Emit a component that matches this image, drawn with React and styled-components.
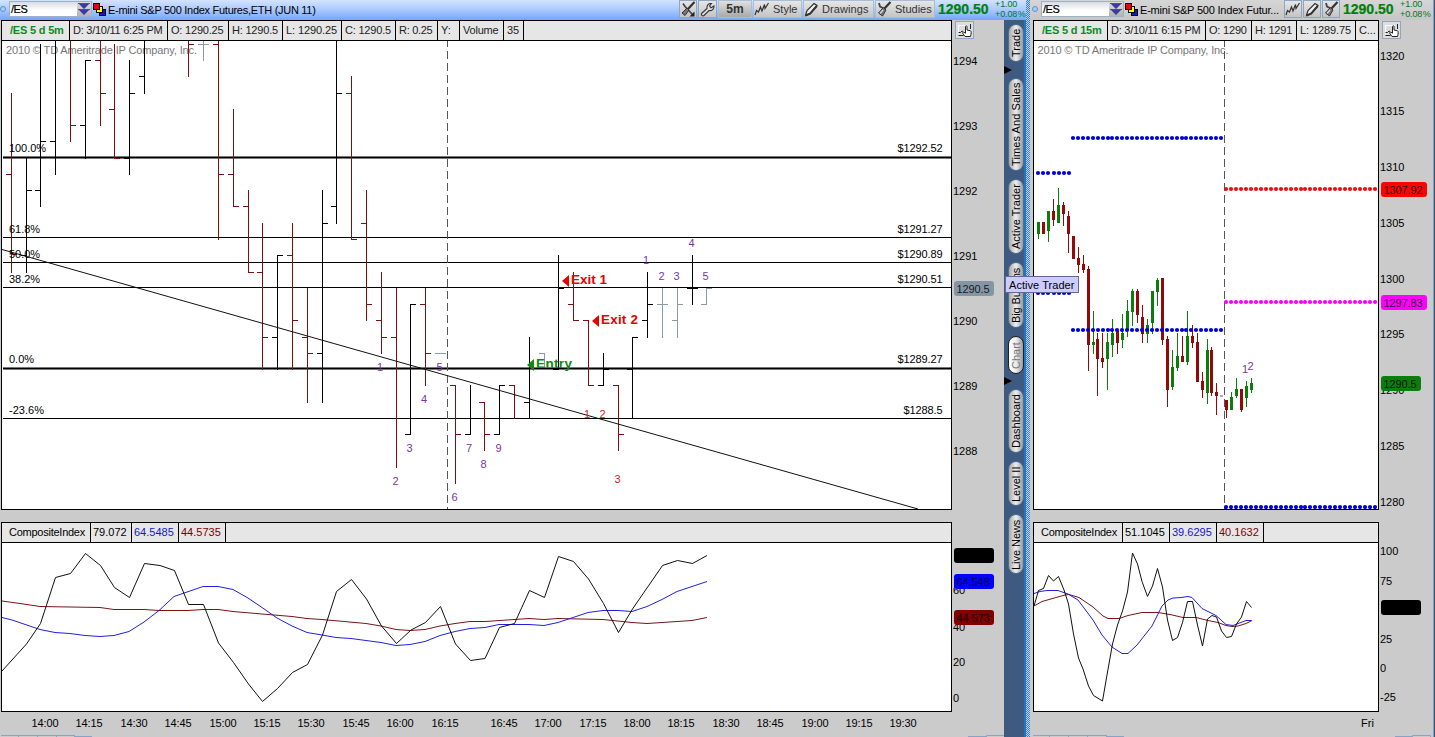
import React from 'react';
import styled, { createGlobalStyle } from "styled-components";

const GlobalStyle = createGlobalStyle`
  body {
    margin: 0;
    background: #cbcbcb;
    overflow: hidden;
  }
  * {
    box-sizing: border-box;
  }
`;

const Screen = styled.div`
  display: flex;
  width: 1435px;
  height: 737px;
  background: #cbcbcb;
  font-family: "Liberation Sans", Arial, sans-serif;
  font-size: 11px;
  color: #000;
  overflow: hidden;
`;

const MainWindow = styled.div`
  display: flex;
  flex-direction: column;
  width: 1026px;
  flex: none;
`;

const MainBody = styled.div`
  display: flex;
  flex: 1;
`;

const SideWindow = styled.div`
  display: flex;
  flex-direction: column;
  width: 403px;
  flex: none;
`;

const Edge = styled.div`
  width: 2px;
  flex: none;
  background: #3f536b;
  border-left: 1px solid #7aa0d0;
`;

const Splitter = styled.div`
  width: 4px;
  flex: none;
  background-color: #a8c0dc;
  background-image: conic-gradient(#2f7fe0 25%, #c4d2e2 0 50%, #2f7fe0 0 75%, #c4d2e2 0);
  background-size: 2px 2px;
`;

/* ---- title bars ---- */

const TitleBar = styled.div`
  display: flex;
  align-items: center;
  height: 20px;
  flex: none;
  padding-left: ${props => props.$side ? 2 : 0}px;
  background: ${props => props.$side
    ? 'linear-gradient(#d6d6d6, #c6c6c6)'
    : 'linear-gradient(#d3e3ff, #a9c8fe 50%, #73a5fb)'};
`;

const LinkDot = styled.div`
  width: 6px;
  height: 6px;
  margin-top: -2px;
  flex: none;
  border: 1px solid #5b92cf;
  border-radius: 50%;
  background: #a9ccf5;
`;

const SymbolBox = styled.div`
  display: flex;
  align-items: center;
  width: 83px;
  height: 16px;
  margin: -3px 1px 0 3px;
  flex: none;
  border: 1px solid #9fb1c6;
  background: linear-gradient(#d8dde3, #fff 60%);
`;

const SymbolText = styled.span`
  flex: 1;
  padding: 1px 0 0 1px;
  letter-spacing: -0.5px;
  -webkit-text-stroke: 0.2px #000;
`;

const DropButton = styled.div`
  display: flex;
  align-items: center;
  justify-content: center;
  width: 14px;
  height: 14px;
  background: linear-gradient(#ddd, #b4b4b4);
`;

const Title = styled.span`
  flex: 1;
  padding-left: 1px;
  white-space: nowrap;
  font-size: 11px;
  letter-spacing: ${props => props.$ls || 0}px;
`;

const ToolButton = styled.div`
  display: flex;
  align-items: center;
  justify-content: ${props => props.$label ? 'flex-start' : 'center'};
  gap: 3px;
  width: ${props => props.$w}px;
  height: 18px;
  margin: -2px 1px 0 0;
  flex: none;
  border: 1px solid ${props => props.$flat ? '#a9bdd6' : '#8fa6c0'};
  background: linear-gradient(${props => props.$dark ? '#e0e0e0, #a9a9a9' : '#e6e6e6, #c4c4c4'});
  color: #333;
  font-size: ${props => props.$bold ? 12 : 11}px;
  font-weight: ${props => props.$bold ? 'bold' : 'normal'};
  letter-spacing: ${props => props.$ls || 0}px;
  line-height: 14px;
  white-space: nowrap;
`;

const LastPrice = styled.span`
  width: 58px;
  margin-top: -2px;
  padding-left: 2px;
  flex: none;
  color: #00800a;
  font-size: 14px;
  font-weight: bold;
  -webkit-text-stroke: 0.2px #00800a;
`;

const NetChange = styled.div`
  display: flex;
  flex-direction: column;
  width: ${props => props.$w}px;
  margin-top: -2px;
  padding-left: 1px;
  flex: none;
  color: #007a1c;
  font-size: 9px;
  line-height: 10px;
  letter-spacing: -0.1px;
  word-spacing: -2px;
  white-space: nowrap;
`;

/* ---- chart panes ---- */

const Charts = styled.div`
  display: flex;
  flex-direction: column;
  width: ${props => props.$w}px;
  padding-left: ${props => props.$pad}px;
  flex: none;
`;

const PaneRow = styled.div`
  display: flex;
  margin-bottom: ${props => props.$gap || 0}px;
`;

const Pane = styled.div`
  width: ${props => props.$w}px;
  flex: none;
  border: 1px solid #000;
  background: #fff;
`;

const Strip = styled.div`
  display: flex;
  height: 20px;
  border-bottom: 1px solid #000;
  background: #e6e6e6;
`;

const Cell = styled.div`
  display: flex;
  align-items: center;
  width: ${props => props.$w}px;
  flex: none;
  padding-left: ${props => props.$pad || 3}px;
  padding-bottom: 1px;
  border-right: ${props => props.$last ? 0 : '1px solid #000'};
  color: ${props => props.$color || '#222'};
  font-weight: ${props => props.$bold ? 'bold' : 'normal'};
  letter-spacing: ${props => props.$ls || 0}px;
  white-space: nowrap;
  overflow: hidden;
`;

const Plot = styled.svg`
  display: block;
  font-family: "Liberation Sans", Arial, sans-serif;
  font-size: 11px;
`;

const AxisColumn = styled.div`
  display: flex;
  flex-direction: column;
  flex: none;
`;

const AxisHead = styled.div`
  height: 20px;
  padding: 1px 0 0 3px;
`;

const HandButton = styled.div`
  width: 19px;
  height: 18px;
  border: 1px solid #8da6c3;
  background: #dedede;
`;

/* ---- gadget rail ---- */

const Rail = styled.div`
  position: relative;
  display: flex;
  flex-direction: column;
  width: 22px;
  padding: 4px 0 0 4px;
  flex: none;
  background: #3e5a80;
  border-right: 2px solid #2272c8;
`;

const Tab = styled.div`
  width: 16px;
  height: ${props => props.$h}px;
  margin-bottom: ${props => props.$gap}px;
  padding-top: ${props => props.$pad || 4}px;
  flex: none;
  border: 1px solid ${props => props.$active ? '#222' : '#4b7096'};
  border-radius: 8px;
  background: linear-gradient(90deg, #999, #eee 50%, ${props => props.$active ? '#fff' : '#a8a8a8'});
  color: ${props => props.$active ? '#777' : '#000'};
  writing-mode: vertical-rl;
  transform: rotate(180deg);
  letter-spacing: ${props => props.$ls || 0}px;
  line-height: 14px;
  white-space: nowrap;
`;

const Arrow = styled.div`
  position: absolute;
  left: 0;
  top: ${props => props.$top}px;
  border-left: 8px solid #000;
  border-top: 4px solid transparent;
  border-bottom: 4px solid transparent;
`;

const Tooltip = styled.div`
  position: absolute;
  left: 1px;
  top: 256px;
  z-index: 2;
  width: 74px;
  height: 17px;
  padding-left: 3px;
  border: 1px solid #666699;
  background: #ccccff;
  line-height: 16px;
  letter-spacing: 0.05px;
  white-space: nowrap;
`;

/* ---- icons ---- */

const Chevrons = () => (
  <svg width="12" height="12" viewBox="0 0 12 12">
    <path d="M0 0h12L6 6zM0 6h12L6 12z" fill="#3a3aa8" />
    <path d="M0 .5h12M0 6.500h12" stroke="#555" />
  </svg>
);

const ColorSquares = () => (
  <svg width="14" height="14" viewBox="0 0 14 14" style={{ flex: 'none' }} shapeRendering="crispEdges">
    <rect x="6.5" y="6.5" width="6" height="6" fill="#0a1ad0" stroke="#000" />
    <rect x="3.5" y="3.5" width="6" height="6" fill="#ff0" stroke="#000" />
    <rect x="0.5" y="0.5" width="6" height="6" fill="#f00010" stroke="#000" />
  </svg>
);

const StudiesIcon = () => (
  <svg width="16" height="16" viewBox="0 0 16 16" fill="none">
    <path d="M3 2l1 3.500 3 1.500" stroke="#444" strokeWidth="1.800" />
    <path d="M14.500 1L8 8" stroke="#333" strokeWidth="2.200" />
    <path d="M7.500 6.500l2.500 2.500-3.500 6-4-3z" fill="#777" stroke="#333" />
    <path d="M7 9l-3 3.500" stroke="#ddd" strokeWidth="1.200" />
  </svg>
);

const CrossToolsIcon = () => (
  <svg width="16" height="16" viewBox="0 0 16 16" fill="none">
    <path d="M3 2.500l2 3 7.500 8" stroke="#444" strokeWidth="1.700" />
    <path d="M14.500 1L8 8" stroke="#333" strokeWidth="2.200" />
    <path d="M7 7l2 2-4 5.500-3-2.500z" fill="#777" stroke="#333" />
    <path d="M14.500 10.500v5h-5z" fill="#222" />
  </svg>
);

const WrenchIcon = () => (
  <svg width="15" height="15" viewBox="0 0 15 15">
    <path
      d="M1.500 11.500L7 6.500C6.500 3.500 8.500 1 11.500 1.500L9.500 4l1.500 1.800L14 4c.2 3-2 5-5 4.600L4 13.500c-1.500 1-3.300-.5-2.500-2z"
      fill="#ddd" stroke="#333" strokeWidth="1.100"
    />
  </svg>
);

const StyleIcon = () => (
  <svg width="16" height="16" viewBox="0 0 16 16" fill="none" stroke="#333" strokeWidth="1.200">
    <path d="M1 14l1.500-4.500 2 1.500L6.500 6 8 10l2.500-6.500.5 4L14.500 2" />
  </svg>
);

const PencilIcon = () => (
  <svg width="15" height="15" viewBox="0 0 15 15">
    <path d="M1.500 13.500l1.500-5L10 1.500l3 2-6.500 8z" fill="#eee" stroke="#333" strokeWidth="1.200" />
    <path d="M1.500 13.500l4.500-1.800L12.800 4" fill="none" stroke="#333" strokeWidth="2" />
  </svg>
);

const HandIcon = () => (
  <svg width="17" height="16" viewBox="0 0 17 16">
    <path d="M2.500 12V3.500h9" fill="none" stroke="#fff" />
    <path d="M2.500 10.500h2l1.500-1.500 1 .5M2.500 13.500h5M14.500 2v5" fill="none" stroke="#222" />
    <path
      d="M9 14.500l-2.500-3.500 1-1 2 1.200V4.500c0-1 1.500-1 1.500 0V8l3.500.8c1 .3.800 3.200 0 5.700z"
      fill="#fff" stroke="#222"
    />
  </svg>
);

/* ---- data ---- */

const RED = '#7c1010';
const INK = '#000';
const GREY = '#8c9aa6';

// x, high, low, open, close, colour
const bars = [
  [11, 93, 272, 174, 254, RED], [26, 158, 272, 255, 190, INK],
  [40, 44, 206, 190, 141, INK], [55, 41, 174, 141, null, INK],
  [70, 41, 141, null, 125, RED], [85, 60, 158, 125, 60, INK],
  [100, 41, 125, 60, 93, RED], [114, 44, 158, 109, 158, RED],
  [129, 60, 174, 158, 93, INK], [144, 41, 93, 76, null, INK],
  [188, 41, 76, null, 44, RED], [203, 41, 60, 44, 44, GREY],
  [218, 41, 239, 44, 174, RED], [233, 109, 206, 174, 206, RED],
  [248, 190, 272, 206, 272, RED], [262, 223, 369, 272, 337, RED],
  [277, 255, 369, 337, 255, INK], [292, 223, 369, 255, 320, RED],
  [307, 288, 402, 337, 353, RED], [322, 190, 402, 353, 223, INK],
  [336, 41, 223, 206, 93, INK], [351, 76, 239, 93, 239, RED],
  [366, 190, 320, 223, 304, RED], [381, 272, 353, 320, 337, RED],
  [396, 288, 467, 337, null, RED], [410, 304, 434, 434, 304, INK],
  [425, 288, 385, 304, 353, RED], [440, 353, 353, 353, 353, GREY],
  [455, 385, 483, 385, 434, RED], [470, 385, 434, 434, null, INK],
  [484, 402, 450, 402, 434, RED], [499, 385, 434, 434, 385, INK],
  [514, 385, 418, 385, null, RED], [529, 337, 418, 402, null, INK],
  [544, 353, 366, 353, null, GREY], [558, 255, 369, 369, 288, INK],
  [573, 272, 320, 304, 320, RED], [588, 320, 385, 320, 385, RED],
  [603, 353, 385, 385, 369, INK], [618, 385, 450, 385, 434, RED],
  [632, 337, 418, 369, 337, INK], [647, 272, 337, 320, 304, INK],
  [662, 288, 337, 304, 304, GREY], [677, 288, 337, 320, 304, GREY],
  [692, 255, 304, 288, 288, INK], [706, 288, 304, 304, 288, GREY],
];

const levels = [
  { y: 157, pct: '100.0%', pctW: 37, price: '$1292.52', w: 45, thick: true },
  { y: 237, pct: '61.8%', pctW: 31, price: '$1291.27', w: 45, ty: 233 },
  { y: 262, pct: '50.0%', pctW: 31, price: '$1290.89', w: 45, ty: 258 },
  { y: 287, pct: '38.2%', pctW: 31, price: '$1290.51', w: 45, ty: 283 },
  { y: 368, pct: '0.0%', pctW: 25, price: '$1289.27', w: 45, thick: true, ty: 363 },
  { y: 418, pct: '-23.6%', pctW: 35, price: '$1288.5', w: 39, ty: 414 },
];

const PURPLE = '#7a35a5';
const counts = [
  [380, 367, '1'], [395.5, 481, '2'], [409.5, 448, '3'], [424, 399, '4'], [439.5, 367, '5'],
  [454.5, 497, '6'], [469, 448, '7'], [483.5, 464, '8'], [498.5, 448, '9'],
  [587, 414, '1', '#e02020'], [602.5, 414, '2', '#e02020'], [617.5, 479, '3', '#e02020'],
  [646, 260, '1'], [661.5, 276, '2'], [676.5, 276, '3'], [691.5, 243, '4'], [705.5, 276, '5'],
];

const notes = [
  { x: 571, y: 284, w: 36, tip: 562, cy: 281, label: 'Exit 1', color: '#e80000' },
  { x: 601, y: 324, w: 37, tip: 592, cy: 321, label: 'Exit 2', color: '#e80000' },
  { x: 536, y: 368, w: 36, tip: 527, cy: 365, label: 'Entry', color: '#0c8a0c' },
];

const UP = '#0a7d0a';
const DOWN = '#930808';

// x, high, low, body top, body bottom, colour
const candles = [
  [1038, 222, 239, 222, 234, UP], [1043, 222, 234, 222, 234, DOWN],
  [1048, 211, 242, 211, 231, UP], [1053, 199, 226, 211, 220, DOWN],
  [1058, 188, 223, 205, 223, UP], [1063, 202, 226, 205, 214, DOWN],
  [1068, 211, 253, 216, 234, DOWN], [1073, 236, 259, 236, 259, DOWN],
  [1078, 247, 273, 258, 265, DOWN], [1083, 255, 273, 264, 270, DOWN],
  [1088, 266, 371, 269, 345, DOWN], [1093, 311, 354, 342, 345, UP],
  [1097, 333, 396, 339, 359, DOWN], [1102, 333, 368, 358, 362, DOWN],
  [1107, 333, 390, 342, 359, UP], [1112, 319, 357, 333, 345, UP],
  [1117, 331, 354, 331, 343, DOWN], [1122, 314, 348, 333, 340, UP],
  [1127, 300, 337, 311, 331, UP], [1132, 289, 326, 291, 312, UP],
  [1137, 289, 323, 291, 315, DOWN], [1142, 305, 343, 317, 334, DOWN],
  [1147, 319, 343, 325, 334, UP], [1152, 291, 334, 291, 323, UP],
  [1157, 278, 306, 280, 292, UP], [1162, 278, 345, 278, 340, DOWN],
  [1167, 336, 407, 339, 390, DOWN], [1172, 350, 390, 367, 387, UP],
  [1177, 333, 371, 356, 368, UP], [1182, 336, 362, 356, 362, DOWN],
  [1187, 311, 365, 336, 362, UP], [1192, 325, 348, 336, 343, DOWN],
  [1197, 333, 382, 342, 382, DOWN], [1202, 372, 398, 381, 390, DOWN],
  [1207, 339, 404, 350, 393, UP], [1211, 347, 396, 350, 393, DOWN],
  [1216, 383, 415, 392, 396, DOWN], [1221, 395, 397, 395, 397, '#b0b0b0'],
  [1226, 400, 418, 400, 410, DOWN], [1231, 392, 410, 397, 410, UP],
  [1236, 378, 398, 389, 396, UP], [1241, 389, 412, 389, 410, DOWN],
  [1246, 381, 407, 386, 398, UP], [1251, 378, 393, 383, 390, UP],
];

// first x, last x, count, y, colour
const dotRows = [
  [1038, 1069, 7, 173, '#0000d8'],
  [1073, 1221, 31, 138, '#0000d8'],
  [1038, 1069, 7, 293, '#0000d8'],
  [1073, 1221, 31, 330, '#0000d8'],
  [1226, 1375, 31, 189, '#e81010'],
  [1226, 1375, 31, 302, '#f800f8'],
  [1226, 1375, 31, 507, '#0000d8'],
];

const mainIndex = {
  red: '2,601 20,603.5 40,606.5 100,607.5 114,609.5 144,609.5 159,610.5 188,610.5 203,609.5 218,609.5 233,611.5 262,614 292,616.5 307,618.5 322,619.5 366,623.5 381,626 396,629.5 410,630.5 425,629.5 440,626 455,623.5 470,621.5 485,621.5 529,618.5 544,619.5 558,618.5 603,619.5 632,622.5 647,623.5 692,620.5 707,617.5',
  blue: '2,617.5 12,620 40,629.5 55,632.5 70,633.5 85,635.5 100,636.5 114,635.5 129,631.5 144,622 159,610.5 174,596.5 203,586.5 218,586.5 233,589.5 248,598 262,607.5 277,618 292,626 307,632.5 322,635 336,637.5 351,638.5 366,640.5 381,642.5 396,645.5 410,644.5 425,641.5 440,635.5 455,631.5 470,628.5 485,627.5 499,624.5 529,624.5 544,625.5 558,622.5 588,612.5 603,610.5 618,610.5 632,611.5 647,606.5 662,599.5 677,591.5 707,581.5',
  black: '2,671 26.5,644 40.5,623.5 55.5,577.5 70.5,573.5 85.5,553.5 100.5,565.5 114.5,587.5 129.5,597.5 144.5,563.5 160,565.5 174.5,570.5 188.5,604.5 203.5,604.5 218.5,643 233.5,662.5 248.5,684 262.5,701.5 277.5,688.5 292.5,672.5 307.5,664.5 322.5,635 336.5,591.5 351.5,579.5 366.5,599 381.5,626 396.5,643.5 411,630 425.5,622.5 440.5,606.5 455.5,644 470.5,660.5 485,658.5 499.5,627.5 514.5,623.5 529.5,590.5 544.5,597.5 558.5,556.5 573.5,561.5 588.5,579 603.5,603.5 618.5,632.5 632.5,609 662.5,565.5 677.5,560.5 692.5,563.5 707,555.5',
};

const sideIndex = {
  red: '1034,606 1042,601.5 1065,595 1069,594.5 1079,597.5 1093,607 1103,616 1108,618.5 1119,618.5 1128,615.5 1142,612.5 1158,612.5 1170,614.5 1183,617.5 1196,617.5 1208,620.5 1218,622.5 1226,625.5 1232,626.5 1238,626 1246,623.5 1252,620.5',
  blue: '1034,593.5 1040,591.5 1047,590.5 1058,590.5 1068,594 1078,600 1093,620 1102,635 1112,647 1122,653.5 1128,653.5 1137,645 1152,626 1162,606 1168,600 1173,598 1181,597.5 1188,596.5 1192,597.5 1202,608.5 1216,615.5 1226,624.5 1233,625.5 1246,620.5 1251,620.5',
  black: '1034,606 1038.5,590.5 1043.5,588.5 1048.5,575.5 1053.5,581 1058.5,576.5 1064,590 1068.5,604 1073.5,634 1078.5,658 1083,669 1088.5,686 1093.5,695.5 1102.5,701 1107,675 1112.5,644 1117.5,625 1122.5,611 1127.5,592 1132.5,553 1137.5,564 1142,581.5 1147.5,596.5 1152.5,586 1157.5,568.5 1162.5,587 1167.5,620 1172.5,640.5 1177.5,637.5 1182.5,622.5 1187.5,601.5 1192.5,601.5 1197.5,625 1202.5,646 1207.5,619 1212,615.5 1216.5,617 1221.5,631 1226.5,637.5 1231.5,636.5 1236.5,624 1241.5,617 1246.5,601.5 1251.5,607.5',
};

const mainTimes = [
  [31.5, '14:00'], [75.5, '14:15'], [120.5, '14:30'], [164.5, '14:45'], [209.5, '15:00'],
  [253.5, '15:15'], [297.5, '15:30'], [342.5, '15:45'], [386.5, '16:00'], [431.5, '16:15'],
  [490.5, '16:45'], [534.5, '17:00'], [579.5, '17:15'], [623.5, '18:00'], [667.5, '18:15'],
  [712.5, '18:30'], [756.5, '18:45'], [801.5, '19:00'], [845.5, '19:15'], [889.5, '19:30'],
];

const tabs = [
  { label: 'Trade', h: 38, gap: 16, pad: 4 },
  { label: 'Times And Sales', h: 93, gap: 8, ls: 0.1 },
  { label: 'Active Trader', h: 75, gap: 8 },
  { label: 'Big Buttons', h: 66, gap: 8, ls: -0.1 },
  { label: 'Chart', h: 38, gap: 15, active: true },
  { label: 'Dashboard', h: 64, gap: 8 },
  { label: 'Level II', h: 45, gap: 8, pad: 3 },
  { label: 'Live News', h: 60, gap: 0, ls: -0.05, pad: 3 },
];

/* ---- chart pieces ---- */

const Watermark = ({ x }) => (
  <text x={x} y="54" fill="#777" textLength="191">2010 © TD Ameritrade IP Company, Inc.</text>
);

const Dashed = ({ x }) => (
  <path d={`M${x}.5 39v471`} stroke="#555" strokeDasharray="8 4" shapeRendering="crispEdges" />
);

const PriceAxis = ({ x, y, width, height, labels, tags }) => (
  <Plot width={width} height={height} viewBox={`${x} ${y} ${width} ${height}`}>
    {labels.map(([cy, label]) => (
      <text key={label} x={x + 1} y={cy + 4}>{label}</text>
    ))}
    {tags.map(([top, w, fill, label]) => (
      <g key={top}>
        <rect x={x + 2} y={top} width={w} height="15" rx="3" fill={fill} />
        <text x={x + 4.5} y={top + 11.5} fillOpacity="0.85" textLength={w - 7}>{label}</text>
      </g>
    ))}
  </Plot>
);

const MainPlot = () => (
  <Plot width="949" height="468" viewBox="2 41 949 468">
    <Watermark x={6} />
    <g shapeRendering="crispEdges">
      {levels.map(l => (
        <g key={l.y}>
          {l.thick && <rect x="3" y={l.y - 1} width="948" height="3" fill="#777" />}
          <rect x="3" y={l.y} width="948" height="1" />
        </g>
      ))}
      {bars.map(([x, high, low, open, close, color]) => (
        <g key={x} fill={color}>
          <rect x={x} y={high} width="1" height={low - high + 1} />
          {open && <rect x={x - 5} y={open} width="5" height="1" />}
          {close && <rect x={x + 1} y={close} width="5" height="1" />}
        </g>
      ))}
      <rect x="687" y="288" width="11" height="1" />
    </g>
    <Dashed x={447} />
    <path d="M2 249.5L918 509" stroke="#111" fill="none" />
    {levels.map(l => (
      <g key={l.y}>
        <text x="9" y={l.ty || 152} textLength={l.pctW}>{l.pct}</text>
        <text x={942.5 - l.w} y={l.ty || 152} textLength={l.w}>{l.price}</text>
      </g>
    ))}
    {counts.map(([x, y, label, color]) => (
      <text key={`${x}-${y}`} x={x} y={y + 4} textAnchor="middle" fill={color || PURPLE}>{label}</text>
    ))}
    {notes.map(n => (
      <g key={n.label} fill={n.color}>
        <path d={`M${n.tip} ${n.cy}l7-6v12z`} />
        <text x={n.x} y={n.y} fontSize="13.500" fontWeight="bold" textLength={n.w}>{n.label}</text>
      </g>
    ))}
  </Plot>
);

const SidePlot = () => (
  <Plot width="344" height="468" viewBox="1034 41 344 468">
    <Watermark x={1037.5} />
    <Dashed x={1224} />
    <g shapeRendering="crispEdges">
      {candles.map(([x, high, low, top, bottom, color]) => (
        <g key={x} fill={color}>
          <rect x={x} y={high} width="1" height={low - high} />
          <rect x={x - 1} y={top} width="3" height={bottom - top} />
        </g>
      ))}
    </g>
    {dotRows.map(([from, to, n, y, color]) => (
      <g key={`${from}-${y}`} fill={color}>
        {Array.from({ length: n }, (_, i) => (
          <circle key={i} cx={Math.round(from + (to - from) * i / (n - 1))} cy={y} r="2.100" />
        ))}
      </g>
    ))}
    <text x="1245" y="373" textAnchor="middle" fill={PURPLE}>1</text>
    <text x="1250.500" y="370" textAnchor="middle" fill={PURPLE}>2</text>
  </Plot>
);

const IndexPlot = ({ x, width, lines }) => (
  <Plot width={width} height="168" viewBox={`${x} 543 ${width} 168`} fill="none">
    <polyline points={lines.red} stroke="#7a1414" />
    <polyline points={lines.blue} stroke="#2020e0" />
    <polyline points={lines.black} stroke="#111" />
  </Plot>
);

const SymbolPicker = () => (
  <>
    <LinkDot />
    <SymbolBox>
      <SymbolText>/ES</SymbolText>
      <DropButton><Chevrons /></DropButton>
    </SymbolBox>
    <ColorSquares />
  </>
);

const Quote = ({ width }) => (
  <>
    <LastPrice>1290.50</LastPrice>
    <NetChange $w={width}>
      <span>+1.00</span>
      <span>+0.08 %</span>
    </NetChange>
  </>
);

const MainCharts = () => (
  <Charts $w={1004} $pad={1}>
    <PaneRow $gap={12}>
      <Pane $w={951}>
        <Strip>
          <Cell $w={68} $pad={8} $bold $color="#0c8a24" $ls={-0.2}>/ES 5 d 5m</Cell>
          <Cell $w={98} $ls={-0.25}>D: 3/10/11 6:25 PM</Cell>
          <Cell $w={61} $ls={-0.2}>O: 1290.25</Cell>
          <Cell $w={54} $ls={-0.2}>H: 1290.5</Cell>
          <Cell $w={59} $ls={-0.1}>L: 1290.25</Cell>
          <Cell $w={54} $ls={-0.2}>C: 1290.5</Cell>
          <Cell $w={42} $ls={-0.3}>R: 0.25</Cell>
          <Cell $w={22}>Y:</Cell>
          <Cell $w={44} $ls={-0.2}>Volume</Cell>
          <Cell $w={20}>35</Cell>
        </Strip>
        <MainPlot />
      </Pane>
      <AxisColumn>
        <AxisHead><HandButton><HandIcon /></HandButton></AxisHead>
        <PriceAxis
          x={952} y={40} width={52} height={470}
          labels={[[61, '1294'], [126, '1293'], [191, '1292'], [256, '1291'], [321, '1290'], [386, '1289'], [451, '1288']]}
          tags={[[281, 40, '#8496a5', '1290.5']]}
        />
      </AxisColumn>
    </PaneRow>
    <PaneRow>
      <Pane $w={951}>
        <Strip>
          <Cell $w={89} $pad={7} $color="#000" $ls={-0.25}>CompositeIndex</Cell>
          <Cell $w={41} $pad={2} $color="#000">79.072</Cell>
          <Cell $w={47} $pad={2} $color="#1414d8">64.5485</Cell>
          <Cell $w={47} $pad={2} $color="#7a0000">44.5735</Cell>
        </Strip>
        <IndexPlot x={2} width={949} lines={mainIndex} />
      </Pane>
      <PriceAxis
        x={952} y={522} width={52} height={190}
        labels={[[590, '60'], [627, '40'], [662, '20'], [698, '0']]}
        tags={[[548, 40, '#000', '79.072'], [574, 40, '#0000ff', '64.548'], [610, 40, '#800000', '44.573']]}
      />
    </PaneRow>
    <Plot width="1003" height="25" viewBox="1 712 1003 25">
      {mainTimes.map(([x, label]) => (
        <text key={label} x={x} y="727" textLength="27">{label}</text>
      ))}
      <path d="M1 735.5h73M18.5 735v2M37.5 735v2M56.5 735v2M74.500 735v2M75 736.5h17M968 736.5h18M986.5 737v-1.500h18" fill="none" stroke="#87a3c6" />
    </Plot>
  </Charts>
);

const SideCharts = () => (
  <Charts $w={403} $pad={3}>
    <PaneRow $gap={12}>
      <Pane $w={346}>
        <Strip>
          <Cell $w={74} $pad={8} $bold $color="#0c8a24" $ls={-0.2}>/ES 5 d 15m</Cell>
          <Cell $w={98} $ls={-0.25}>D: 3/10/11 6:15 PM</Cell>
          <Cell $w={46} $ls={-0.2}>O: 1290</Cell>
          <Cell $w={45} $ls={-0.2}>H: 1291</Cell>
          <Cell $w={59} $ls={-0.1}>L: 1289.75</Cell>
          <Cell $w={22} $ls={-0.1} $last>C...</Cell>
        </Strip>
        <SidePlot />
      </Pane>
      <AxisColumn>
        <AxisHead><HandButton><HandIcon /></HandButton></AxisHead>
        <PriceAxis
          x={1379} y={40} width={54} height={470}
          labels={[[56, '1320'], [111, '1315'], [167, '1310'], [223, '1305'], [279, '1300'], [334, '1295'], [390, '1290'], [446, '1285'], [502, '1280']]}
          tags={[[182, 46, '#fb0404', '1307.92'], [295, 46, '#ff00ff', '1297.83'], [376, 40, '#0a7d0a', '1290.5']]}
        />
      </AxisColumn>
    </PaneRow>
    <PaneRow>
      <Pane $w={346}>
        <Strip>
          <Cell $w={89} $pad={7} $color="#000" $ls={-0.25}>CompositeIndex</Cell>
          <Cell $w={47} $pad={2} $color="#000">51.1045</Cell>
          <Cell $w={47} $pad={2} $color="#1414d8">39.6295</Cell>
          <Cell $w={47} $pad={2} $color="#7a0000">40.1632</Cell>
        </Strip>
        <IndexPlot x={1034} width={344} lines={sideIndex} />
      </Pane>
      <PriceAxis
        x={1379} y={522} width={54} height={190}
        labels={[[551, '100'], [581, '75'], [639, '25'], [668, '0'], [697, '-25']]}
        tags={[[600, 40, '#000', '51.104']]}
      />
    </PaneRow>
    <Plot width="400" height="25" viewBox="1033 712 400 25">
      <text x="1361" y="727">Fri</text>
      <path d="M1033 735.5h73M1049.500 735v2M1068.500 735v2M1087.500 735v2M1106.500 735v2M1107 736.5h17M1395 736.5h17M1412.500 737v-1.500h18v1.500" fill="none" stroke="#87a3c6" />
    </Plot>
  </Charts>
);

export default function App() {
  return (
    <Screen>
      <GlobalStyle />
      <MainWindow>
        <TitleBar>
          <SymbolPicker />
          <Title $ls={-0.28}>E-mini S&amp;P 500 Index Futures,ETH (JUN 11)</Title>
          <ToolButton $w={18}><CrossToolsIcon /></ToolButton>
          <ToolButton $w={19}><WrenchIcon /></ToolButton>
          <ToolButton $w={34} $dark $bold $flat>5m</ToolButton>
          <ToolButton $w={49} $label $flat><StyleIcon />Style</ToolButton>
          <ToolButton $w={71} $label $flat $ls={0.1}><PencilIcon />Drawings</ToolButton>
          <ToolButton $w={60} $label $flat><StudiesIcon />Studies</ToolButton>
          <Quote width={32} />
        </TitleBar>
        <MainBody>
          <MainCharts />
          <Rail>
            {tabs.map(t => (
              <Tab key={t.label} $h={t.h} $gap={t.gap} $ls={t.ls} $pad={t.pad} $active={t.active}>{t.label}</Tab>
            ))}
            <Arrow $top={46} />
            <Arrow $top={357} />
            <Tooltip>Active Trader</Tooltip>
          </Rail>
        </MainBody>
      </MainWindow>
      <Splitter />
      <SideWindow>
        <TitleBar $side>
          <SymbolPicker />
          <Title $ls={-0.2}>E-mini S&amp;P 500 Index Futur...</Title>
          <ToolButton $w={18}><StyleIcon /></ToolButton>
          <ToolButton $w={18}><PencilIcon /></ToolButton>
          <ToolButton $w={18}><StudiesIcon /></ToolButton>
          <Quote width={34} />
        </TitleBar>
        <SideCharts />
      </SideWindow>
      <Edge />
    </Screen>
  );
}
